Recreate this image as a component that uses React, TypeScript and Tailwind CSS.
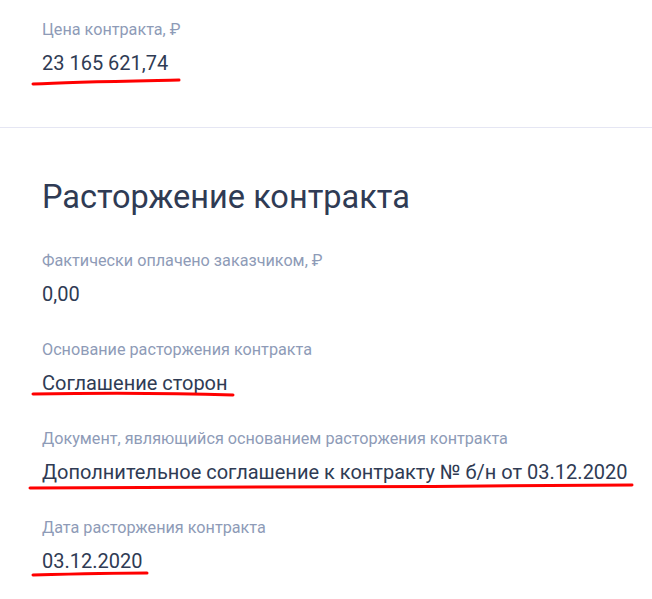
import React from "react";

const font = { fontFamily: "Roboto, 'Noto Sans', sans-serif" };

function Field({ label, value, mark }: { label: string; value: string; mark?: React.ReactNode }) {
  return (
    <div className="relative flex flex-col">
      <div className="whitespace-nowrap text-[16.2px] leading-[20px] text-[#8e9bb7]">{label}</div>
      <div className="mt-[11px] whitespace-nowrap text-[20px] leading-[24px] text-[#2f3b54]">{value}</div>
      {mark}
    </div>
  );
}

function Mark({ w, d, top, left }: { w: number; d: string; top: number; left: number }) {
  return (
    <svg
      className="absolute pointer-events-none"
      style={{ top, left }}
      width={w}
      height={8}
      viewBox={`0 0 ${w} 8`}
    >
      <path d={d} stroke="#ff0000" strokeWidth={3} strokeLinecap="round" fill="none" />
    </svg>
  );
}

export default function App() {
  return (
    <div className="w-[652px] h-[599px] bg-white overflow-hidden" style={font}>
      <div className="px-[42px] pt-[20px] pb-[52px]">
        <Field
          label="Цена контракта, ₽"
          value="23 165 621,74"
          mark={<Mark w={152} top={58} left={-11} d="M2 6 C 40 4, 100 3, 148 2" />}
        />
      </div>
      <div className="h-px bg-[#e5e6f3]" />
      <div className="px-[42px] pt-[49px]">
        <h1 className="text-[32.5px] leading-[40px] text-[#2f3b54]">Расторжение контракта</h1>
        <div className="mt-[34px] flex flex-col gap-[34px]">
          <Field label="Фактически оплачено заказчиком, ₽" value="0,00" />
          <Field
            label="Основание расторжения контракта"
            value="Соглашение сторон"
            mark={<Mark w={206} top={50} left={-11} d="M2 4 C 60 3, 140 3, 202 5" />}
          />
          <Field
            label="Документ, являющийся основанием расторжения контракта"
            value="Дополнительное соглашение к контракту № б/н от 03.12.2020"
            mark={<Mark w={608} top={54} left={-14} d="M2 5 C 150 4, 400 4, 604 2" />}
          />
          <Field
            label="Дата расторжения контракта"
            value="03.12.2020"
            mark={<Mark w={120} top={52} left={-11} d="M2 5 C 40 4, 80 3, 116 3" />}
          />
        </div>
      </div>
    </div>
  );
}
